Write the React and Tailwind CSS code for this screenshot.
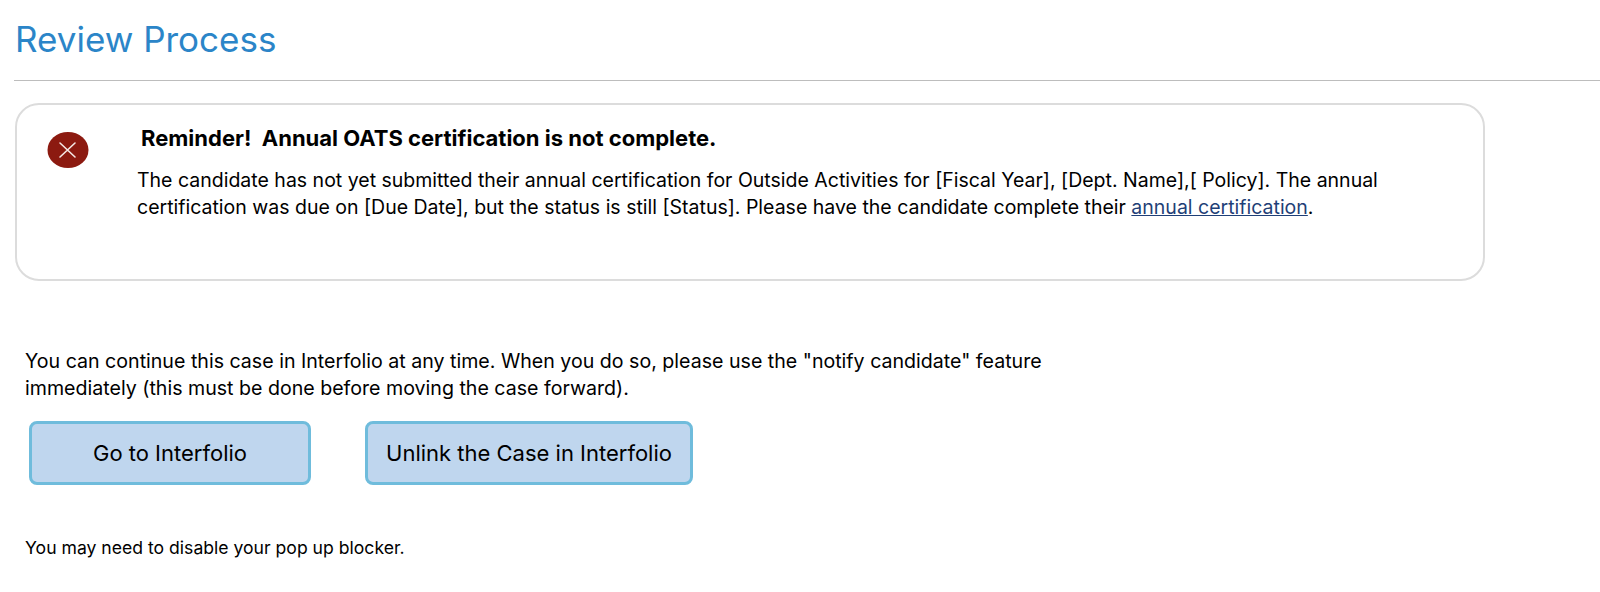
import React from 'react';

const App = () => {
  return (
    <div className="w-[1600px] h-[592px] overflow-hidden bg-white text-black font-['Inter','Liberation_Sans',sans-serif]">
      <div className="pl-[14px] pt-[16px]">
        <h1 className="pl-px text-[35px] leading-[46px] font-normal text-[#2b85c8]">Review Process</h1>
        <hr className="mt-[18px] border-0 border-t border-[#bdbdbd]" />

        <div className="mt-[22px] ml-px flex w-[1470px] h-[178px] rounded-[24px] border-2 border-[#dcdcdc]">
          <div className="pl-[30px] pt-[27px] w-[120px] shrink-0">
            <svg width="42" height="36" viewBox="0 0 42 36">
              <ellipse cx="21" cy="18" rx="20.5" ry="18" fill="#8c1a10" />
              <path d="M13 11 L28 25 M28 11 L13 25" stroke="#f5e9e6" strokeWidth="1.6" strokeLinecap="round" />
            </svg>
          </div>
          <div className="pt-[19px]">
            <h2 className="pl-[4px] text-[22px] leading-[28px] font-bold whitespace-pre">Reminder!  Annual OATS certification is not complete.</h2>
            <p className="mt-[15px] text-[19.5px] leading-[26.5px] w-[1320px]">
              The candidate has not yet submitted their annual certification for Outside Activities for [Fiscal Year], [Dept. Name],[ Policy]. The annual
              <br />
              certification was due on [Due Date], but the status is still [Status]. Please have the candidate complete their{' '}
              <a href="#" className="text-[#1f3f77] underline">annual certification</a>.
            </p>
          </div>
        </div>

        <div className="pl-[11px]">
          <p className="mt-[67px] text-[19.6px] leading-[27px]">
            You can continue this case in Interfolio at any time. When you do so, please use the "notify candidate" feature
            <br />
            immediately (this must be done before moving the case forward).
          </p>
          <div className="mt-[19px] pl-[4px] flex gap-[54px]">
            <button className="w-[282px] h-[64px] rounded-[8px] border-[3px] border-[#6fbcdc] bg-[#bfd6ee] text-[22px]">Go to Interfolio</button>
            <button className="w-[328px] h-[64px] rounded-[8px] border-[3px] border-[#6fbcdc] bg-[#bfd6ee] text-[22px]">Unlink the Case in Interfolio</button>
          </div>
          <p className="mt-[51px] text-[17.6px] leading-[24px]">You may need to disable your pop up blocker.</p>
        </div>
      </div>
    </div>
  );
};

export default App;
